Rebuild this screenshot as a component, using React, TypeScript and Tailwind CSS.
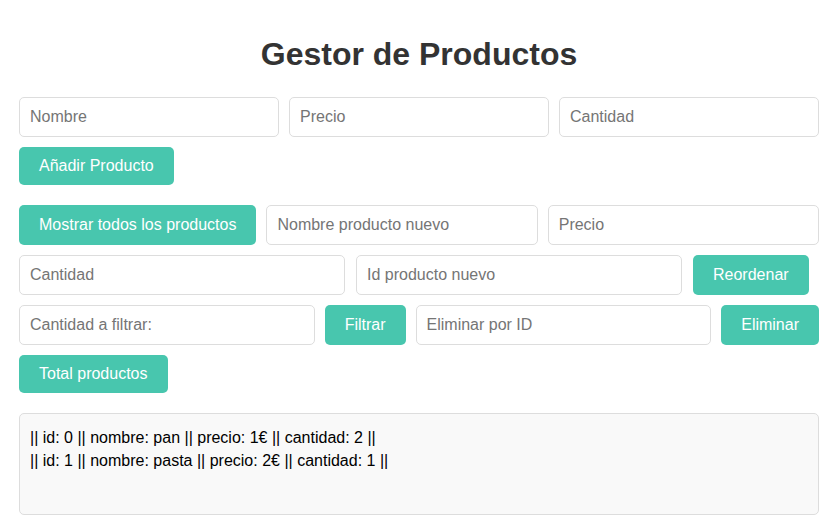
import React from "react";

const inputCls =
  "h-[40px] rounded-[5px] border border-[#dddddd] bg-white px-[10px] text-[16px] text-[#333] placeholder:text-[#757575] outline-none";
const btnCls =
  "rounded-[5px] bg-[#48c6ae] px-[20px] text-[16px] text-white leading-[18px] whitespace-nowrap";

export default function App() {
  return (
    <div
      className="min-h-[531px] w-full bg-white"
      style={{ fontFamily: '"Liberation Sans", Arial, sans-serif' }}
    >
      <div className="ml-[19px] w-[800px] pt-[36px]">
        <h1 className="text-center text-[32px] font-bold leading-[37px] text-[#333333]">
          Gestor de Productos
        </h1>

        <div className="mt-[24px] flex gap-[10px]">
          <input className={`${inputCls} min-w-0 flex-1`} placeholder="Nombre" />
          <input className={`${inputCls} min-w-0 flex-1`} placeholder="Precio" />
          <input className={`${inputCls} min-w-0 flex-1`} placeholder="Cantidad" />
        </div>
        <div className="mt-[10px] flex">
          <button className={`${btnCls} h-[38px]`}>Añadir Producto</button>
        </div>

        <div className="mt-[20px] flex gap-[10px]">
          <button className={`${btnCls} h-[40px]`}>Mostrar todos los productos</button>
          <input className={`${inputCls} min-w-0 flex-1`} placeholder="Nombre producto nuevo" />
          <input className={`${inputCls} min-w-0 flex-1`} placeholder="Precio" />
        </div>

        <div className="mt-[10px] flex gap-[11px]">
          <input className={`${inputCls} w-[326px]`} placeholder="Cantidad" />
          <input className={`${inputCls} w-[326px]`} placeholder="Id producto nuevo" />
          <button className={`${btnCls} h-[40px]`}>Reordenar</button>
        </div>

        <div className="mt-[10px] flex gap-[10px]">
          <input className={`${inputCls} min-w-0 flex-1`} placeholder="Cantidad a filtrar:" />
          <button className={`${btnCls} h-[40px]`}>Filtrar</button>
          <input className={`${inputCls} min-w-0 flex-1`} placeholder="Eliminar por ID" />
          <button className={`${btnCls} h-[40px]`}>Eliminar</button>
        </div>

        <div className="mt-[10px] flex">
          <button className={`${btnCls} h-[38px]`}>Total productos</button>
        </div>

        <div className="mt-[20px] min-h-[102px] rounded-[5px] border border-[#dddddd] bg-[#f9f9f9] px-[10px] pt-[12px] pb-[10px] text-[16px] leading-[23px] text-black">
          <div>|| id: 0 || nombre: pan || precio: 1€ || cantidad: 2 ||</div>
          <div>|| id: 1 || nombre: pasta || precio: 2€ || cantidad: 1 ||</div>
        </div>
      </div>
    </div>
  );
}
